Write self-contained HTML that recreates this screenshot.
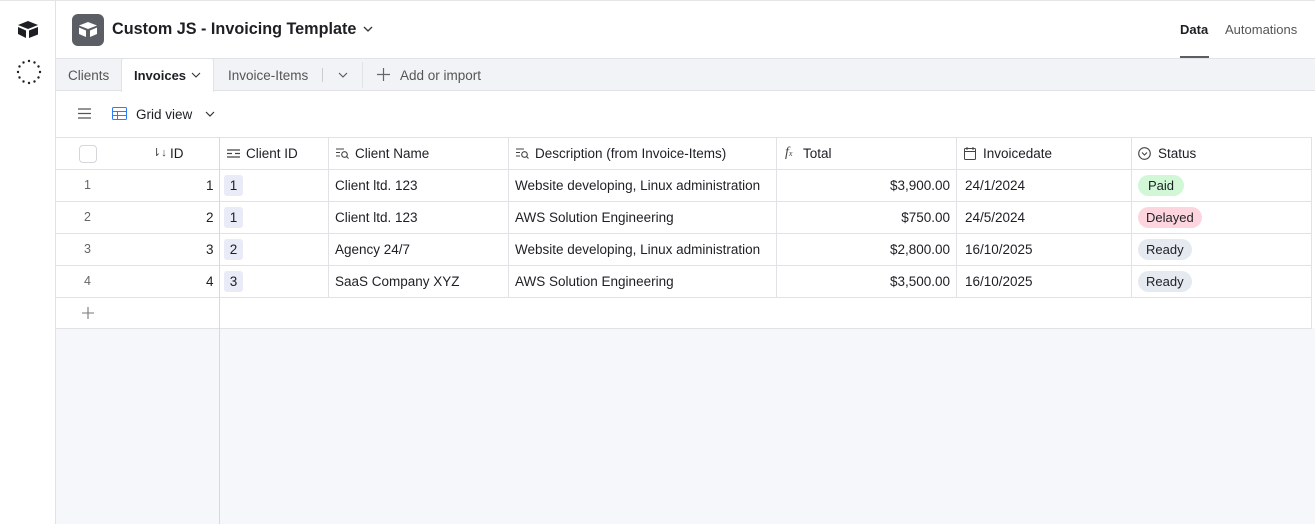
<!DOCTYPE html>
<html><head><style>
*{box-sizing:border-box;margin:0;padding:0}
body{width:1315px;height:524px;overflow:hidden;background:#fff;font-family:"Liberation Sans",sans-serif;color:#1d1f25;position:relative;font-size:13.5px}
.a{position:absolute}
.hl{position:absolute;height:1px;background:#e1e2e6}
.vl{position:absolute;width:1px;background:#e1e2e6}
.t{position:absolute;white-space:nowrap}
.pill{position:absolute;height:21px;border-radius:11px;padding:0 8px;line-height:21px;font-size:13px}
.cid{position:absolute;left:224px;width:19px;height:21px;background:#e9ecf6;border-radius:3px;text-align:center;line-height:21px}
</style></head><body>
<div class="hl" style="top:0;left:0;width:1315px;background:#e5e5e5"></div>
<div class="vl" style="left:55px;top:1px;height:523px"></div>
<svg class="a" style="left:17px;top:20px" width="22" height="19" viewBox="0 0 22 19"><path d="M11 1 L21 5 L11 9 L1 5Z" fill="#1d1f25"/><path d="M1 7 L9 10.5 L9 18 L1 14Z" fill="#1d1f25"/><path d="M12 10.5 L21 7 L21 14.5 L12 18Z" fill="#1d1f25"/></svg>
<svg class="a" style="left:16px;top:59px" width="26" height="26" viewBox="0 0 26 26"><g fill="#1d1f25"><circle cx="13" cy="2" r="1.2"/><circle cx="18.5" cy="3.5" r="1.2"/><circle cx="22.5" cy="7.5" r="1.2"/><circle cx="24" cy="13" r="1.2"/><circle cx="22.5" cy="18.5" r="1.2"/><circle cx="18.5" cy="22.5" r="1.2"/><circle cx="13" cy="24" r="1.2"/><circle cx="7.5" cy="22.5" r="1.2"/><circle cx="3.5" cy="18.5" r="1.2"/><circle cx="2" cy="13" r="1.2"/><circle cx="3.5" cy="7.5" r="1.2"/><circle cx="7.5" cy="3.5" r="1.2"/></g></svg>
<div class="a" style="left:72px;top:14px;width:32px;height:32px;background:#5c5e66;border-radius:6px"></div>
<svg class="a" style="left:77px;top:20px" width="22" height="20" viewBox="0 0 22 20"><path d="M11 2 L20 5.5 L11 9 L2 5.5Z" fill="#fff"/><path d="M2 7.5 L9 10.5 L9 17 L2 14Z" fill="#fff"/><path d="M13 10.5 L20 7.5 L20 14 L13 17Z" fill="#fff"/></svg>
<div class="t" style="left:112px;top:20px;font-size:16.2px;font-weight:bold">Custom JS - Invoicing Template</div>
<svg class="a" style="left:363px;top:26px" width="10" height="7"><path d="M1 1l4 4 4-4" stroke="#333" stroke-width="1.3" fill="none"/></svg>
<div class="t" style="left:1180px;top:22px;font-size:13px;font-weight:bold;color:#1d1f25">Data</div>
<div class="t" style="left:1225px;top:22px;font-size:13px;color:#555">Automations</div>
<div class="a" style="left:1180px;top:56px;width:29px;height:2px;background:#5c5e66"></div>
<div class="a" style="left:56px;top:58px;width:1259px;height:33px;background:#f2f3f6;border-top:1px solid #e1e2e6;border-bottom:1px solid #e1e2e6"></div>
<div class="a" style="left:121px;top:58px;width:93px;height:34px;background:#fff;border:1px solid #e1e2e6;border-bottom:none;border-radius:3px 3px 0 0"></div>
<div class="t" style="left:68px;top:68px;color:#555">Clients</div>
<div class="t" style="left:134px;top:68px;font-weight:bold;color:#1d1f25;font-size:13px">Invoices</div>
<svg class="a" style="left:191px;top:72px" width="10" height="7"><path d="M1 1l4 4 4-4" stroke="#333" stroke-width="1.1" fill="none"/></svg>
<div class="t" style="left:228px;top:68px;color:#555">Invoice-Items</div>
<div class="vl" style="left:322px;top:68px;height:14px;background:#ccc"></div>
<svg class="a" style="left:338px;top:72px" width="10" height="7"><path d="M1 1l4 4 4-4" stroke="#555" stroke-width="1.1" fill="none"/></svg>
<div class="vl" style="left:362px;top:62px;height:26px"></div>
<svg class="a" style="left:377px;top:68px" width="13" height="13"><path d="M6.5 0v13M0 6.5h13" stroke="#666" stroke-width="1.2"/></svg>
<div class="t" style="left:400px;top:68px;color:#555">Add or import</div>
<svg class="a" style="left:78px;top:108px" width="13" height="11"><path d="M0 1h13M0 5.5h13M0 10h13" stroke="#555" stroke-width="1.3"/></svg>
<svg class="a" style="left:112px;top:107px" width="15" height="13"><rect x=".5" y=".5" width="14" height="12" rx="1" fill="none" stroke="#2d7ff9"/><path d="M.5 4.5h14M.5 8.5h14M5.5 4.5v8" stroke="#2d7ff9"/></svg>
<div class="t" style="left:136px;top:107px;color:#1d1f25">Grid view</div>
<svg class="a" style="left:205px;top:111px" width="10" height="7"><path d="M1 1l4 4 4-4" stroke="#333" stroke-width="1.2" fill="none"/></svg>
<div class="a" style="left:56px;top:328px;width:1259px;height:196px;background:#f6f7fb"></div>
<div class="hl" style="left:56px;top:137px;width:1256px"></div>
<div class="hl" style="left:56px;top:169px;width:1256px"></div>
<div class="hl" style="left:56px;top:201px;width:1256px"></div>
<div class="hl" style="left:56px;top:233px;width:1256px"></div>
<div class="hl" style="left:56px;top:265px;width:1256px"></div>
<div class="hl" style="left:56px;top:297px;width:1256px"></div>
<div class="hl" style="left:56px;top:328px;width:1256px"></div>
<div class="vl" style="left:219px;top:137px;height:387px;background:#d8d9dd"></div>
<div class="vl" style="left:328px;top:137px;height:160px"></div>
<div class="vl" style="left:508px;top:137px;height:160px"></div>
<div class="vl" style="left:776px;top:137px;height:160px"></div>
<div class="vl" style="left:956px;top:137px;height:160px"></div>
<div class="vl" style="left:1131px;top:137px;height:160px"></div>
<div class="vl" style="left:1311px;top:137px;height:191px"></div>
<div class="a" style="left:79px;top:145px;width:18px;height:18px;border:1px solid #d5d6da;border-radius:4px"></div>
<div class="t" style="left:152px;top:146px;font-size:11px;color:#444">⇂↓</div>
<div class="t" style="left:170px;top:146px">ID</div>
<svg class="a" style="left:227px;top:149px" width="13" height="9"><path d="M0 1h13M0 4.5h5M8 4.5h5M0 8h13" stroke="#444" stroke-width="1.2"/></svg>
<div class="t" style="left:246px;top:146px">Client ID</div>
<svg class="a" style="left:336px;top:148px" width="13" height="11"><path d="M0 1h8M0 4.5h4M0 8h4" stroke="#444" stroke-width="1.1"/><circle cx="8.5" cy="6.5" r="2.8" fill="none" stroke="#444" stroke-width="1.1"/><path d="M10.5 8.5l2 2" stroke="#444" stroke-width="1.1"/></svg>
<div class="t" style="left:355px;top:146px">Client Name</div>
<svg class="a" style="left:516px;top:148px" width="13" height="11"><path d="M0 1h8M0 4.5h4M0 8h4" stroke="#444" stroke-width="1.1"/><circle cx="8.5" cy="6.5" r="2.8" fill="none" stroke="#444" stroke-width="1.1"/><path d="M10.5 8.5l2 2" stroke="#444" stroke-width="1.1"/></svg>
<div class="t" style="left:535px;top:146px">Description (from Invoice-Items)</div>
<div class="t" style="left:785px;top:145px;font-style:italic;font-family:'Liberation Serif',serif;font-size:14px;color:#444">f<span style="font-size:8px">x</span></div>
<div class="t" style="left:803px;top:146px">Total</div>
<svg class="a" style="left:964px;top:147px" width="12" height="13"><rect x=".5" y="1.5" width="11" height="11" rx="1" fill="none" stroke="#444"/><path d="M.5 4.5h11M3 0v3M9 0v3" stroke="#444"/></svg>
<div class="t" style="left:983px;top:146px">Invoicedate</div>
<svg class="a" style="left:1138px;top:147px" width="13" height="13"><circle cx="6.5" cy="6.5" r="5.8" fill="none" stroke="#444" stroke-width="1.1"/><path d="M4 5.5l2.5 2.5 2.5-2.5" fill="none" stroke="#444" stroke-width="1.1"/></svg>
<div class="t" style="left:1158px;top:146px">Status</div>
<div class="t" style="left:84px;top:178px;color:#666;font-size:12.5px">1</div>
<div class="t" style="left:84px;top:210px;color:#666;font-size:12.5px">2</div>
<div class="t" style="left:84px;top:242px;color:#666;font-size:12.5px">3</div>
<div class="t" style="left:84px;top:274px;color:#666;font-size:12.5px">4</div>
<div class="t" style="left:206px;top:178px">1</div>
<div class="t" style="left:206px;top:210px">2</div>
<div class="t" style="left:206px;top:242px">3</div>
<div class="t" style="left:206px;top:274px">4</div>
<div class="cid" style="top:175px">1</div>
<div class="cid" style="top:207px">1</div>
<div class="cid" style="top:239px">2</div>
<div class="cid" style="top:271px">3</div>
<div class="t" style="left:335px;top:178px">Client ltd. 123</div>
<div class="t" style="left:335px;top:210px">Client ltd. 123</div>
<div class="t" style="left:335px;top:242px">Agency 24/7</div>
<div class="t" style="left:335px;top:274px">SaaS Company XYZ</div>
<div class="t" style="left:515px;top:178px">Website developing, Linux administration</div>
<div class="t" style="left:515px;top:210px">AWS Solution Engineering</div>
<div class="t" style="left:515px;top:242px">Website developing, Linux administration</div>
<div class="t" style="left:515px;top:274px">AWS Solution Engineering</div>
<div class="t" style="right:365px;top:178px">$3,900.00</div>
<div class="t" style="right:365px;top:210px">$750.00</div>
<div class="t" style="right:365px;top:242px">$2,800.00</div>
<div class="t" style="right:365px;top:274px">$3,500.00</div>
<div class="t" style="left:965px;top:178px">24/1/2024</div>
<div class="t" style="left:965px;top:210px">24/5/2024</div>
<div class="t" style="left:965px;top:242px">16/10/2025</div>
<div class="t" style="left:965px;top:274px">16/10/2025</div>
<div class="pill" style="left:1138px;top:175px;background:#d1f7d7;padding:0 10px">Paid</div>
<div class="pill" style="left:1138px;top:207px;background:#fdd5de">Delayed</div>
<div class="pill" style="left:1138px;top:239px;background:#e5e9f0">Ready</div>
<div class="pill" style="left:1138px;top:271px;background:#e5e9f0">Ready</div>
<svg class="a" style="left:82px;top:307px" width="12" height="12"><path d="M6 0v12M0 6h12" stroke="#777" stroke-width="1.1"/></svg>
</body></html>
